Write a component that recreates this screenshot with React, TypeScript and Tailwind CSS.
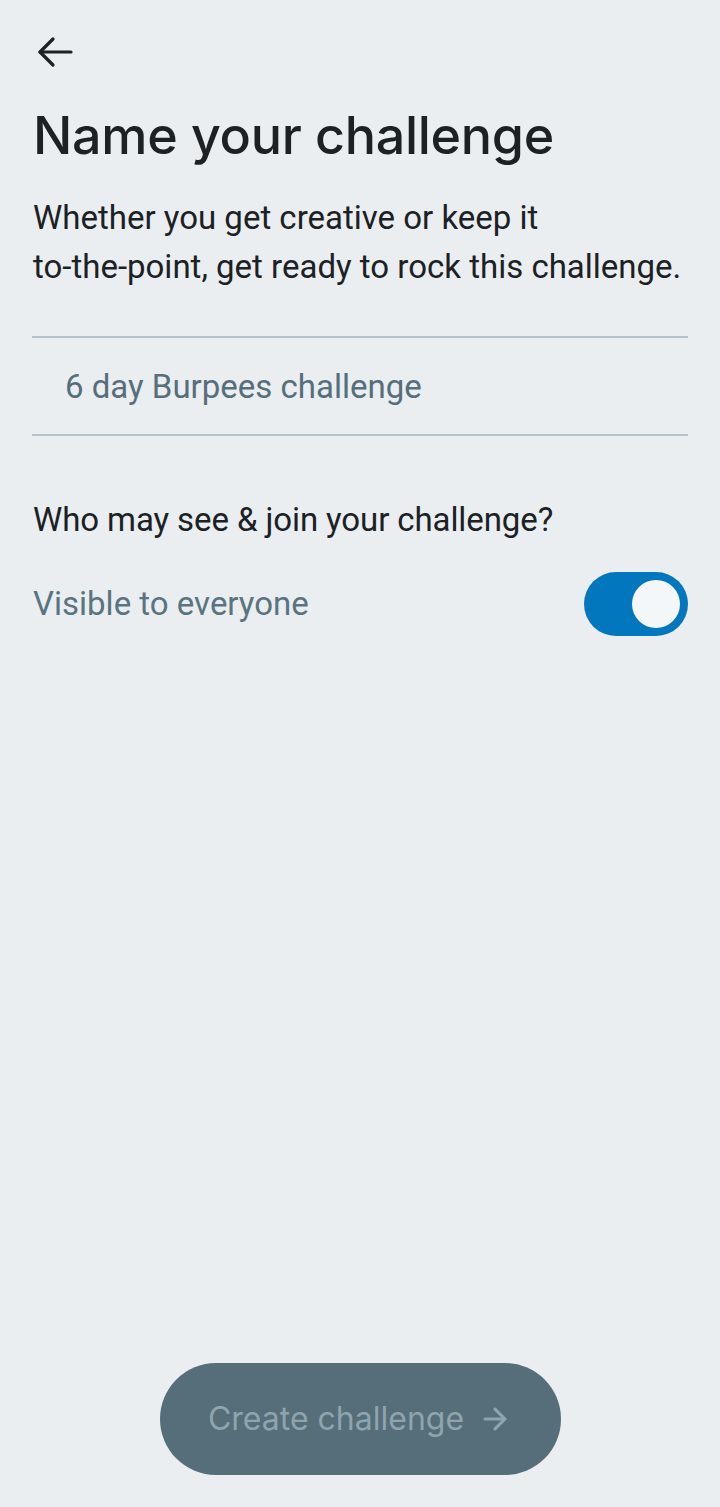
import { ArrowRight } from "lucide-react";

function BackArrow() {
  return (
    <svg width="36" height="32" viewBox="0 0 36 32" fill="none" stroke="currentColor" strokeWidth="3.2" strokeLinecap="round" strokeLinejoin="round">
      <path d="M34 16H3" />
      <path d="M16 3L3 16l13 13" />
    </svg>
  );
}

export default function App() {
  return (
    <div className="flex min-h-[1507px] flex-col bg-[#eaeef1] text-[#1b2124]" style={{ fontFamily: "Roboto, 'Liberation Sans', sans-serif" }}>
      {/* Header */}
      <div className="px-[33px] pt-[36px]">
        <button className="flex h-[32px] w-[40px] items-center pl-[4px]" aria-label="Back">
          <BackArrow />
        </button>
        <h1 className="mt-[38px] text-[52px] font-medium leading-[60px] tracking-[-0.3px]" style={{ fontFamily: "Inter, sans-serif" }}>
          Name your challenge
        </h1>
        <p className="mt-[27px] text-[33px] leading-[49px]">
          Whether you get creative or keep it
          <br />
          to-the-point, get ready to rock this challenge.
        </p>
      </div>

      {/* Name input */}
      <div className="mx-[32px] mt-[45px] border-y-2 border-[#b3c1c8]">
        <input
          className="h-[96px] w-full bg-transparent px-[33px] text-[33px] text-[#566f7b] outline-none"
          defaultValue="6 day Burpees challenge"
        />
      </div>

      {/* Visibility */}
      <div className="px-[33px] pt-[64px]">
        <p className="text-[33px] leading-[40px] tracking-[-0.1px]">Who may see &amp; join your challenge?</p>
        <div className="mt-[32px] flex items-center justify-between">
          <span className="text-[33px] text-[#5a7480]">Visible to everyone</span>
          <div className="-mr-[1px] flex h-[64px] w-[104px] items-center justify-end rounded-full bg-[#0277bd] pr-[8px]">
            <div className="h-[48px] w-[48px] rounded-full bg-[#f4f7f9]" />
          </div>
        </div>
      </div>

      {/* Footer */}
      <div className="mt-auto flex justify-center pb-[32px]">
        <button className="flex h-[112px] w-[401px] items-center justify-center gap-[14px] rounded-full bg-[#566e79] text-[32px] text-[#8ea4ae]" style={{ fontFamily: "Inter, sans-serif" }}>
          Create challenge
          <ArrowRight className="h-[34px] w-[34px]" strokeWidth={2.2} />
        </button>
      </div>
    </div>
  );
}
